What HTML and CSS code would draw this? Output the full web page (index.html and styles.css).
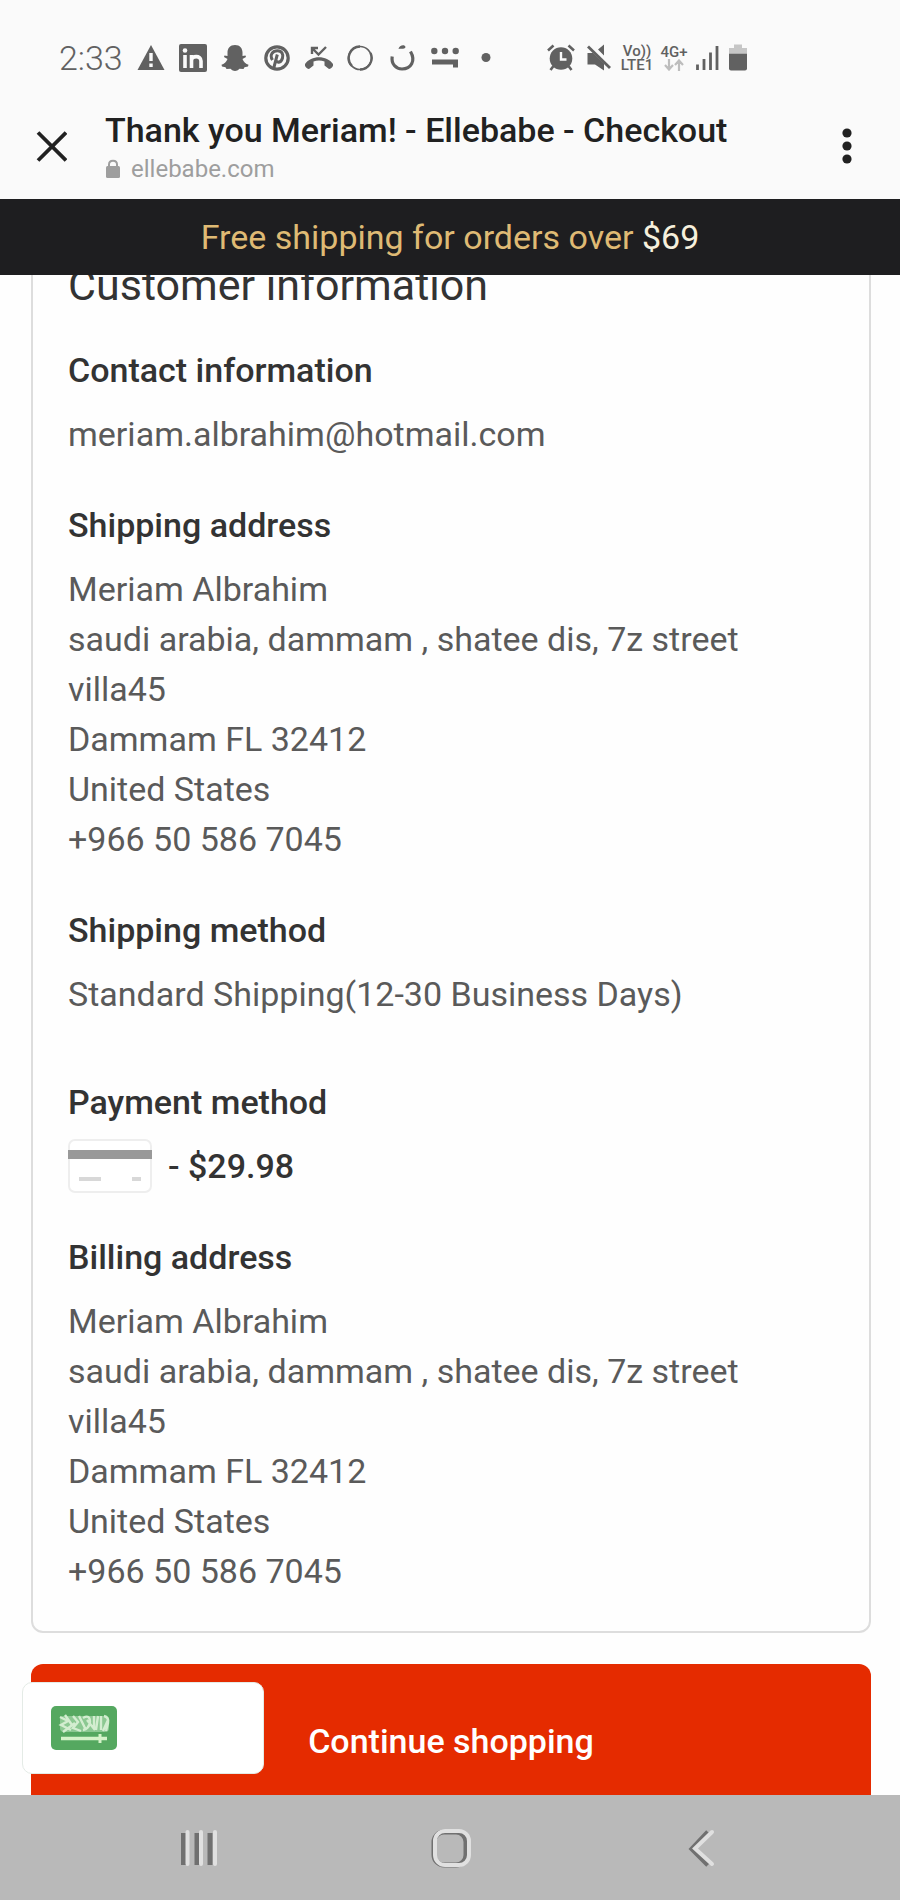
FILE: index.html
```html
<!DOCTYPE html>
<html lang="en">
<head>
    <meta charset="UTF-8">
    <meta name="viewport" content="width=device-width, initial-scale=1.0">
    <title>Thank you Meriam! - Ellebabe - Checkout</title>
    <link rel="stylesheet" href="styles.css">
</head>
<body>
    <div class="status-bar">
        <span class="time">2:33</span>
        <div class="status-left">
            <svg width="28" height="28" viewBox="0 0 28 28">
                <path d="M14 1 L27.5 26 H0.5 Z" fill="#616161"/>
                <path d="M12.3 9 h3.4 v8 h-3.4 z M12.3 19.5 h3.4 v3.5 h-3.4 z" fill="#fafafa"/>
            </svg>
            <svg width="28" height="28" viewBox="0 0 28 28">
                <rect width="28" height="28" rx="2" fill="#616161"/>
                <circle cx="6" cy="6.5" r="2.3" fill="#fafafa"/>
                <path d="M6 11 V24 M12.5 24 V11 M12.5 24 V16.5 C12.5 11.5 22 11 22 17 V24" fill="none" stroke="#fafafa" stroke-width="3.6"/>
            </svg>
            <svg width="28" height="28" viewBox="0 0 28 28">
                <path d="M14 1 C9 1 6.5 4.500 6.500 8.500 V12 L3.500 11.500 L3 13 L6.500 15 C5.500 18 3 20 0.500 20.800 L1 22.500 L4.500 23.300 L5.500 25 L9.500 24.700 C11 26 12.500 27 14 27 C15.500 27 17 26 18.500 24.700 L22.500 25 L23.500 23.300 L27 22.500 L27.500 20.800 C25 20 22.500 18 21.500 15 L25 13 L24.500 11.500 L21.500 12 V8.500 C21.500 4.500 19 1 14 1 Z" fill="#616161"/>
            </svg>
            <svg width="28" height="28" viewBox="0 0 28 28">
                <circle cx="14" cy="14" r="11.200" fill="none" stroke="#616161" stroke-width="3.200"/>
                <path d="M10.500 25 L14.300 10.500 M9.500 16 C6 10.500 10 6.800 14.500 6.800 C19 6.800 20.500 10.500 19.500 14 C18.300 18.600 14.500 19.200 13 16.500" fill="none" stroke="#616161" stroke-width="3"/>
            </svg>
            <svg width="28" height="28" viewBox="1 0 28 28">
                <path d="M1 20 C7 11 23 11 29 20 C30 22 27 25 25 25 L20.500 21.500 V17.500 C17 16.300 13 16.300 9.500 17.500 V21.500 L5 25 C3 25 0 22 1 20 Z" fill="#616161"/>
                <path d="M8 10 V4 H14 M8.500 4.500 L14.500 10.500 L22 3" fill="none" stroke="#616161" stroke-width="2.400"/>
            </svg>
            <svg width="28" height="28" viewBox="0 0 28 28">
                <circle cx="13" cy="14" r="11.500" fill="none" stroke="#616161" stroke-width="1.600"/>
                <path d="M13 2.500 A11.500 11.500 0 0 0 5 22 M13 25.500 A11.500 11.500 0 0 0 23.500 9" fill="none" stroke="#616161" stroke-width="2.400"/>
            </svg>
            <svg width="28" height="28" viewBox="0 0 28 28">
                <path d="M3.200 12.500 C2 20 7 25 13 25 C22 25 27 17 21.500 7.500" fill="none" stroke="#616161" stroke-width="3.200"/>
                <path d="M9.500 5 C10 1 16 0 16.500 3 C16 5.500 13 4.500 9.500 5 Z" fill="#616161"/>
            </svg>
            <svg width="28" height="28" viewBox="0 0 28 28">
                <circle cx="3.300" cy="7" r="3.200" fill="#616161"/>
                <circle cx="14" cy="7" r="3.200" fill="#616161"/>
                <circle cx="24.700" cy="7" r="3.200" fill="#616161"/>
                <path d="M1 15.500 H27 V23.500 H22 V20.500 H1 Z" fill="#616161"/>
            </svg>
            <svg width="28" height="28" viewBox="0 0 28 28">
                <circle cx="13" cy="13.500" r="4.500" fill="#616161"/>
            </svg>
        </div>
        <div class="status-right">
            <svg width="30" height="28" viewBox="0 0 30 28">
                <circle cx="15" cy="14.500" r="11.300" fill="#616161"/>
                <path d="M2 6.500 L7.500 1.500 M28 6.500 L22.500 1.500 M7.500 22 L4.500 26 M22.500 22 L25.500 26" stroke="#616161" stroke-width="2.600"/>
                <path d="M15 8 V15.500 H20.500" fill="none" stroke="#fafafa" stroke-width="2.400"/>
            </svg>
            <svg width="30" height="28" viewBox="0 0 30 28">
                <path d="M3.500 9 H9 L20 19.500 V26.500 L11 20.500 H3.500 Z M14 5.500 L20 0.500 V11.500 Z" fill="#616161"/>
                <path d="M4 2.500 L26 24" stroke="#616161" stroke-width="2.800"/>
            </svg>
            <span class="volte"><span>Vo))</span><span>LTE1</span></span>
            <span class="network">
                <span>4G+</span>
                <svg width="20" height="12" viewBox="0 0 20 12">
                    <path d="M5 0 V10 M1 6 L5 10.500 L9 6 M15 12 V2 M11 6 L15 1.500 L19 6" fill="none" stroke="#bdbdbd" stroke-width="2.200"/>
                </svg>
            </span>
            <svg width="24" height="28" viewBox="0 0 24 28">
                <path d="M1.500 20.500 V26 M8 15 V26 M14.500 8.500 V26 M21 2 V26" stroke="#616161" stroke-width="2.800"/>
            </svg>
            <svg width="20" height="28" viewBox="0 0 20 28">
                <path d="M1 9 V4 H6 V0.500 H14 V4 H19 V9 Z" fill="#c6c6c6"/>
                <path d="M1 9.500 H19 V24.500 Q19 26.500 17 26.500 H3 Q1 26.500 1 24.500 Z" fill="#616161"/>
            </svg>
        </div>
    </div>

    <header class="browser-bar">
        <button class="icon-button" aria-label="Close">
            <svg width="32" height="32" viewBox="0 0 32 32">
                <path d="M3 2.500 L31 30.500 M31 2.500 L3 30.500" stroke="#212121" stroke-width="3.800"/>
            </svg>
        </button>
        <div class="page-info">
            <div class="page-title">Thank you Meriam! - Ellebabe - Checkout</div>
            <div class="page-url">
                <svg width="16" height="20" viewBox="0 0 16 20">
                    <rect x="1" y="7" width="14" height="12" rx="1.500" fill="#9e9e9e"/>
                    <path d="M4 8 V5.500 C4 0.500 12 0.500 12 5.500 V8" fill="none" stroke="#9e9e9e" stroke-width="2"/>
                </svg>
                <span>ellebabe.com</span>
            </div>
        </div>
        <button class="icon-button" aria-label="More options">
            <svg width="10" height="36" viewBox="0 0 10 36">
                <circle cx="5" cy="5" r="4.600" fill="#212121"/>
                <circle cx="5" cy="18" r="4.600" fill="#212121"/>
                <circle cx="5" cy="31" r="4.600" fill="#212121"/>
            </svg>
        </button>
    </header>

    <div class="promo">Free shipping for orders over <span>$69</span></div>

    <main class="content">
        <section class="card">
            <h2>Customer information</h2>

            <h3>Contact information</h3>
            <p>meriam.albrahim@hotmail.com</p>

            <h3>Shipping address</h3>
            <address>
                Meriam Albrahim<br>
                saudi arabia, dammam , shatee dis, 7z street<br>
                villa45<br>
                Dammam FL 32412<br>
                United States<br>
                +966 50 586 7045
            </address>

            <h3>Shipping method</h3>
            <p class="method">Standard Shipping(12-30 Business Days)</p>

            <h3>Payment method</h3>
            <div class="payment">
                <svg width="84" height="54" viewBox="0 0 84 54">
                    <rect x="1" y="1" width="82" height="52" rx="6" fill="#ffffff" stroke="#eeeeee" stroke-width="2"/>
                    <rect y="11" width="84" height="9" fill="#999999"/>
                    <path d="M11 40 H33 M64 40 H73" stroke="#d8d8d8" stroke-width="4"/>
                </svg>
                <span>- $29.98</span>
            </div>

            <h3>Billing address</h3>
            <address>
                Meriam Albrahim<br>
                saudi arabia, dammam , shatee dis, 7z street<br>
                villa45<br>
                Dammam FL 32412<br>
                United States<br>
                +966 50 586 7045
            </address>
        </section>

        <a href="#" class="continue">Continue shopping</a>

        <button class="country" aria-label="Saudi Arabia">
            <svg width="66" height="44" viewBox="0 0 66 44">
                <rect width="66" height="44" rx="5" fill="#55a860"/>
                <rect x="9" y="10" width="49" height="16" rx="4" fill="#8cc892"/>
                <path d="M9 11 L17 15 L10 19 L20 24 M14 9 L21 19 M12 26 L24 17 M22 10 L27 16 L22 22 L30 25 M28 10 L34 22 M32 12 Q39 8 39 16 Q38 23 32 24 M36 14 L44 24 M43 10 V22 M47 10 L45 24 M50 10 V24 M53 10 Q58 11 57 17 L55 25 M52 25 L57 14" fill="none" stroke="#d3edd0" stroke-width="2.400"/>
                <path d="M10 32.500 H56" stroke="#d5f2c9" stroke-width="3.600"/>
                <path d="M49 28 V37" stroke="#d5f2c9" stroke-width="3"/>
            </svg>
        </button>
    </main>

    <nav class="nav-bar">
        <button class="icon-button" aria-label="Recent apps">
            <svg width="40" height="40" viewBox="0 0 40 40">
                <path d="M3.500 5 V37 M17 5 V37 M30 5 V37" stroke="#707070" stroke-width="5"/>
                <path d="M7.500 4 V36 M21 4 V36 M35 4 V36" stroke="#e0e0e0" stroke-width="4" stroke-linecap="round"/>
            </svg>
        </button>
        <button class="icon-button" aria-label="Home">
            <svg width="42" height="40" viewBox="0 0 42 40">
                <rect x="4" y="4" width="32" height="33" rx="10" fill="none" stroke="#707070" stroke-width="5"/>
                <rect x="5" y="3" width="34" height="34" rx="10" fill="none" stroke="#e0e0e0" stroke-width="4"/>
            </svg>
        </button>
        <button class="icon-button" aria-label="Back">
            <svg width="40" height="40" viewBox="0 0 40 40">
                <path d="M26 4 L10 21 L26 37" fill="none" stroke="#707070" stroke-width="5"/>
                <path d="M30 4 L13 20.500 L30 36" fill="none" stroke="#e0e0e0" stroke-width="4" stroke-linecap="round"/>
            </svg>
        </button>
    </nav>
</body>
</html>
```
FILE: styles.css
```css
* {
    box-sizing: border-box;
}
body {
    font-family: Roboto, sans-serif;
    margin: 0;
    height: 100vh;
    display: flex;
    flex-direction: column;
    background-color: #fefefe;
    color: #333333;
    font-size: 34px;
    line-height: 50px;
}
svg {
    display: block;
    flex: none;
}
.status-bar {
    display: flex;
    align-items: center;
    height: 106px;
    padding: 10px 60px 0 59px;
    background-color: #fafafa;
    color: #616161;
}
.time {
    width: 78px;
    font-weight: 300;
}
.status-left {
    display: flex;
    gap: 14px;
}
.status-right {
    display: flex;
    align-items: center;
    gap: 8px;
    margin-left: 45px;
}
.volte, .network {
    display: flex;
    flex-direction: column;
    align-items: center;
    width: 30px;
    font-size: 15px;
    font-weight: 500;
    line-height: 14px;
}
.network {
    width: 28px;
}
.browser-bar {
    display: flex;
    align-items: center;
    height: 93px;
    padding: 0 48px 13px 35px;
    background-color: #fafafa;
}
.icon-button {
    padding: 0;
    border: none;
    background: none;
}
.page-info {
    flex: 1;
    margin-left: 38px;
    padding-top: 6px;
}
.page-title {
    color: #212121;
    font-weight: 500;
    line-height: 40px;
}
.page-url {
    display: flex;
    align-items: center;
    gap: 10px;
    color: #9e9e9e;
    font-size: 24px;
    line-height: 38px;
}
.promo {
    height: 76px;
    background-color: #1e1e20;
    color: #dfba74;
    line-height: 76px;
    text-align: center;
}
.promo span {
    color: #f6f0dc;
}
.content {
    position: relative;
    flex: 1;
    min-height: 0;
    overflow: hidden;
    padding: 0 29px 0 31px;
}
/* scrolled a little, so the heading runs under the promo bar */
.card {
    margin-top: -52px;
    padding: 35px;
    border: 2px solid #dddddd;
    border-radius: 12px;
}
h2, h3, p {
    margin: 0;
}
h2 {
    font-size: 43px;
    font-weight: 400;
    margin-bottom: 35px;
}
h3 {
    font-size: 34px;
    font-weight: 500;
    margin-bottom: 14px;
}
p, address {
    margin-bottom: 41px;
    color: #5a5a5a;
    font-style: normal;
}
.method {
    margin-bottom: 58px;
}
.payment {
    display: flex;
    align-items: center;
    gap: 16px;
    margin-top: -2px;
    margin-bottom: 39px;
    font-weight: 500;
}
.card address:last-child {
    margin-bottom: 0;
}
.continue {
    display: block;
    margin-top: 31px;
    padding: 52px 0;
    border-radius: 12px;
    background-color: #e52b00;
    color: white;
    font-weight: 500;
    text-align: center;
    text-decoration: none;
}
.country {
    position: absolute;
    left: 22px;
    bottom: 21px;
    width: 242px;
    height: 92px;
    padding: 0 0 0 28px;
    border: 1px solid #e4ebe6;
    border-radius: 10px;
    background-color: white;
}
.nav-bar {
    display: flex;
    align-items: center;
    justify-content: space-between;
    height: 105px;
    padding: 0 178px 0 180px;
    background-color: #b9b9b9;
}
```
